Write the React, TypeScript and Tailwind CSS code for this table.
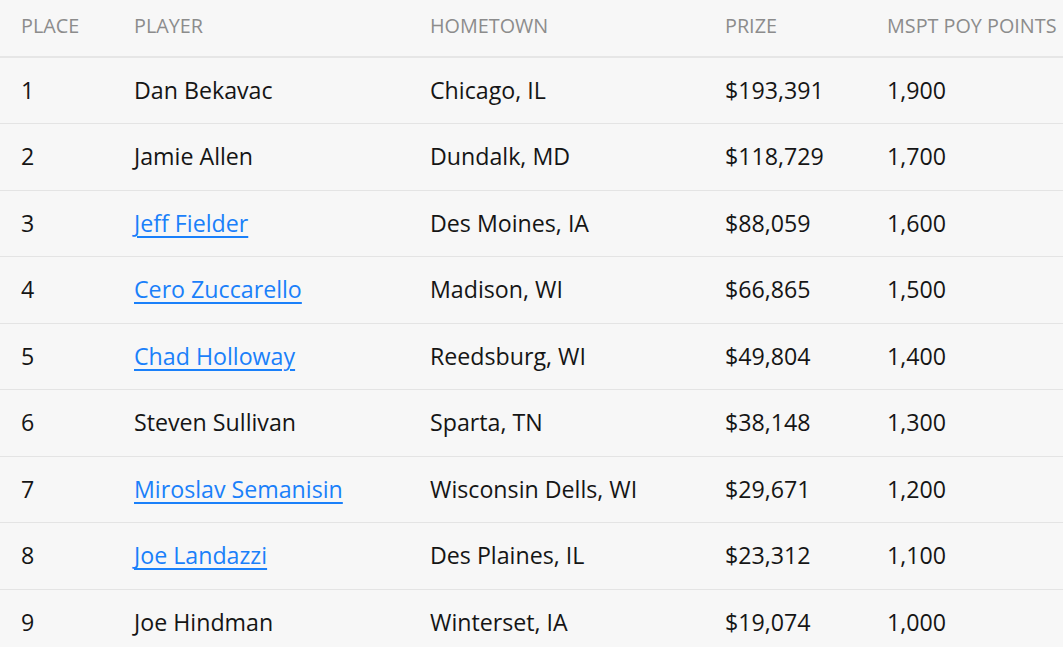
const rows = [
  { place: 1, player: 'Dan Bekavac', link: false, town: 'Chicago, IL', prize: '$193,391', points: '1,900' },
  { place: 2, player: 'Jamie Allen', link: false, town: 'Dundalk, MD', prize: '$118,729', points: '1,700' },
  { place: 3, player: 'Jeff Fielder', link: true, town: 'Des Moines, IA', prize: '$88,059', points: '1,600' },
  { place: 4, player: 'Cero Zuccarello', link: true, town: 'Madison, WI', prize: '$66,865', points: '1,500' },
  { place: 5, player: 'Chad Holloway', link: true, town: 'Reedsburg, WI', prize: '$49,804', points: '1,400' },
  { place: 6, player: 'Steven Sullivan', link: false, town: 'Sparta, TN', prize: '$38,148', points: '1,300' },
  { place: 7, player: 'Miroslav Semanisin', link: true, town: 'Wisconsin Dells, WI', prize: '$29,671', points: '1,200' },
  { place: 8, player: 'Joe Landazzi', link: true, town: 'Des Plaines, IL', prize: '$23,312', points: '1,100' },
  { place: 9, player: 'Joe Hindman', link: false, town: 'Winterset, IA', prize: '$19,074', points: '1,000' },
];

export default function App() {
  return (
    <div className="min-h-screen w-[1063px] overflow-hidden bg-[#f7f7f7] font-['Open_Sans',sans-serif]">
      <table className="w-[1100px] table-fixed border-collapse">
        <colgroup>
          <col className="w-[113px]" />
          <col className="w-[296px]" />
          <col className="w-[295px]" />
          <col className="w-[162px]" />
          <col />
        </colgroup>
        <thead>
          <tr className="h-[57px] border-b-2 border-[#e6e6e6] text-left text-[19.8px] text-[#8c8c8c]">
            <th className="pl-[21px] pb-[5px] font-normal whitespace-nowrap">PLACE</th>
            <th className="pl-[21px] pb-[5px] font-normal whitespace-nowrap">PLAYER</th>
            <th className="pl-[21px] pb-[5px] font-normal whitespace-nowrap">HOMETOWN</th>
            <th className="pl-[21px] pb-[5px] font-normal whitespace-nowrap">PRIZE</th>
            <th className="pl-[21px] pb-[5px] font-normal whitespace-nowrap">MSPT POY POINTS</th>
          </tr>
        </thead>
        <tbody className="text-[23.2px] text-[#151515]">
          {rows.map((r) => (
            <tr key={r.place} className="h-[66.5px] border-b border-[#e4e4e4]">
              <td className="pl-[21px]">{r.place}</td>
              <td className="pl-[21px] whitespace-nowrap">
                {r.link ? (
                  <a href="#" className="text-[#1a80fa] underline decoration-2 underline-offset-[4px]">
                    {r.player}
                  </a>
                ) : (
                  r.player
                )}
              </td>
              <td className="pl-[21px] whitespace-nowrap">{r.town}</td>
              <td className="pl-[21px]">{r.prize}</td>
              <td className="pl-[21px]">{r.points}</td>
            </tr>
          ))}
        </tbody>
      </table>
    </div>
  );
}
